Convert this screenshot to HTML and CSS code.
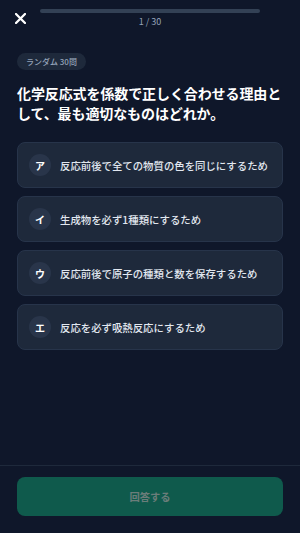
FILE: index.html
```html
<!DOCTYPE html>
<html lang="ja">
<head>
  <meta charset="UTF-8" />
  <title>クイズ</title>
  <link rel="stylesheet" href="styles.css">
</head>
<body>

<div class="screen">
  <div class="top-bar">
    <button class="close-btn" aria-label="閉じる">
      <svg width="11" height="11" viewBox="0 0 11 11">
        <path d="M1 1 L10 10 M10 1 L1 10" stroke="#ffffff" stroke-width="2.3" stroke-linecap="round" />
      </svg>
    </button>
    <div class="progress">
      <div class="progress-track"><div class="progress-fill" style="width: 0%"></div></div>
      <div class="progress-text">1 / 30</div>
    </div>
    <div></div>
  </div>

  <div class="content">
    <div class="tag">ランダム 30問</div>
    <h1 class="question">化学反応式を係数で正しく合わせる理由として、最も適切なものはどれか。</h1>

    <div class="options">
      <div class="option"><span class="mark">ア</span><span class="option-text">反応前後で全ての物質の色を同じにするため</span></div>
      <div class="option"><span class="mark">イ</span><span class="option-text">生成物を必ず1種類にするため</span></div>
      <div class="option"><span class="mark">ウ</span><span class="option-text">反応前後で原子の種類と数を保存するため</span></div>
      <div class="option"><span class="mark">エ</span><span class="option-text">反応を必ず吸熱反応にするため</span></div>
    </div>
  </div>

  <div class="footer">
    <button class="answer-btn" disabled>回答する</button>
  </div>
</div>

</body>
</html>
```

FILE: styles.css
```css
html, body {
  margin: 0;
  padding: 0;
  height: 100%;
}
body {
  font-family: "Noto Sans CJK JP", "Noto Sans", sans-serif;
  background: #0f172a;
  color: #ffffff;
}
.screen {
  display: flex;
  flex-direction: column;
  height: 100vh;
}
.top-bar {
  display: grid;
  grid-template-columns: 40px 1fr 40px;
  padding-top: 9px;
}
.close-btn {
  background: none;
  border: none;
  padding: 0;
  height: 18px;
  display: flex;
  justify-content: center;
  align-items: center;
  cursor: pointer;
}
.progress {
  display: flex;
  flex-direction: column;
  align-items: center;
}
.progress-track {
  width: 100%;
  height: 4px;
  border-radius: 2px;
  background: #334155;
  overflow: hidden;
}
.progress-fill {
  height: 100%;
  background: #10b981;
}
.progress-text {
  font-size: 9px;
  line-height: 12px;
  margin-top: 3px;
  color: #94a3b8;
}
.content {
  flex: 1;
  padding: 25px 17px 0;
}
.tag {
  width: fit-content;
  font-size: 8px;
  font-weight: 500;
  line-height: 17px;
  padding: 0 9px;
  border-radius: 9px;
  background: #1e293b;
  color: #94a3b8;
}
.question {
  font-size: 14px;
  font-weight: 700;
  line-height: 20px;
  margin: 13px 0 19px;
  letter-spacing: -0.1px;
}
.options {
  display: flex;
  flex-direction: column;
  gap: 8px;
}
.option {
  display: flex;
  align-items: center;
  gap: 9px;
  height: 46px;
  box-sizing: border-box;
  padding: 0 11px;
  background: #1e293b;
  border: 1px solid #27344a;
  border-radius: 8px;
}
.mark {
  width: 22px;
  height: 22px;
  flex-shrink: 0;
  border-radius: 50%;
  background: #29354a;
  display: flex;
  justify-content: center;
  align-items: center;
  font-size: 10px;
  font-weight: 700;
}
.option-text {
  font-size: 10.4px;
  font-weight: 500;
  color: #e2e8f0;
  white-space: nowrap;
}
.footer {
  border-top: 1px solid #1e293b;
  padding: 11px 17px 17px;
}
.answer-btn {
  width: 100%;
  height: 39px;
  border: none;
  border-radius: 8px;
  background: #0f5a4c;
  color: #6b7d7a;
  font-family: inherit;
  font-size: 10.3px;
  font-weight: 700;
}
```
